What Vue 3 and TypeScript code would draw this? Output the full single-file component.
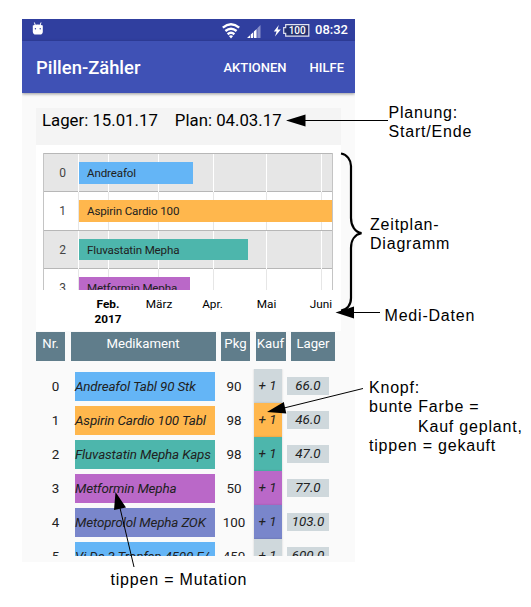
<script setup lang="ts">
interface Medication {
  nr: number
  name: string
  pack: number
  stock: string
  color: string
  buy: string
}

interface ChartRow {
  nr: number
  name: string
  color: string
  width: number
}

const blue = '#64b5f6'
const orange = '#ffb74d'
const teal = '#4db6ac'
const purple = '#ba68c8'
const indigo = '#7986cb'
const grey = '#cfd8dc'

const chartRows: ChartRow[] = [
  { nr: 0, name: 'Andreafol', color: blue, width: 114 },
  { nr: 1, name: 'Aspirin Cardio 100', color: orange, width: 255 },
  { nr: 2, name: 'Fluvastatin Mepha', color: teal, width: 169 },
  { nr: 3, name: 'Metformin Mepha', color: purple, width: 110.5 },
]

const medications: Medication[] = [
  { nr: 0, name: 'Andreafol Tabl 90 Stk', pack: 90, stock: '66.0', color: blue, buy: grey },
  { nr: 1, name: 'Aspirin Cardio 100 Tabl', pack: 98, stock: '46.0', color: orange, buy: orange },
  { nr: 2, name: 'Fluvastatin Mepha Kaps', pack: 98, stock: '47.0', color: teal, buy: teal },
  { nr: 3, name: 'Metformin Mepha', pack: 50, stock: '77.0', color: purple, buy: purple },
  { nr: 4, name: 'Metoprolol Mepha ZOK', pack: 100, stock: '103.0', color: indigo, buy: indigo },
  { nr: 5, name: 'Vi De 3 Tropfen 4500 E/', pack: 450, stock: '600.0', color: blue, buy: grey },
]
</script>

<template>
  <main class="page">
    <section class="phone">
      <div class="status">
        <svg class="robot" width="12" height="13" viewBox="0 0 12 13">
          <path d="M2.4 0.5 3.2 3M9 0.5 8.2 3" stroke="#fff" stroke-width="1" />
          <path d="M.8 3.4Q5.7 1.8 10.8 3.4V9.5Q10.8 12.6 7.8 12.6H3.8Q.8 12.6 .8 9.5Z" fill="#fff" />
          <circle cx="3.4" cy="6.8" r=".7" fill="#303f9f" />
          <circle cx="8.2" cy="6.8" r=".7" fill="#303f9f" />
        </svg>
        <svg class="signals" width="88" height="16" viewBox="0 0 88 16">
          <g fill="none" stroke="#fff" stroke-width="2.4">
            <path d="M0.8 4.6Q9 -2 17.2 4.6" />
            <path d="M3.4 8Q9 3.4 14.6 8" />
            <path d="M5.6 11.2Q9 8.4 12.4 11.2" />
          </g>
          <path d="M6.9 13 9 15.4 11.1 13Q9 11.4 6.9 13Z" fill="#fff" />
          <path d="M25 15 28 12.2V15ZM28.7 11.6 31.2 9.2V15H28.7ZM31.9 8.6 34.6 6V15H31.9Z" fill="#fff" />
          <path d="M35.3 5.3 38.5 2V15H35.3Z" fill="#8990ca" />
          <path d="M56.8 2 51.8 8.6H54.6L53 13.4 58.8 6.4H55.6Z" fill="#fff" />
          <path d="M63.7 1.6H86.8V13.2H63.7V10.3H61.7V4.6H63.7Z" fill="#24306f" stroke="#dfe2f2" stroke-width="1.2" />
          <text x="75.2" y="11" text-anchor="middle">100</text>
        </svg>
        <span class="clock">08:32</span>
      </div>
      <header class="appbar">
        <h1>Pillen-Zähler</h1>
        <span class="action">AKTIONEN</span>
        <span class="action help">HILFE</span>
      </header>

      <div class="content">
        <div class="plan">
          <span>Lager: 15.01.17</span>
          <span>Plan: 04.03.17</span>
        </div>
        <div class="chart">
          <div class="plot">
            <div v-for="row in chartRows" :key="row.nr" class="chart-row">
              <span class="row-nr">{{ row.nr }}</span>
              <div class="track">
                <svg class="grid" width="255" height="38" viewBox="0 0 255 38">
                  <path d="M.5 0V38M30.5 0V38M80.5 0V38M135.5 0V38M188.5 0V38M243.5 0V38" />
                </svg>
                <div class="bar" :style="{ width: row.width + 'px', background: row.color }">{{ row.name }}</div>
              </div>
            </div>
          </div>
          <div class="axis">
            <b>Feb.<br />2017</b><span>März</span><span>Apr.</span><span>Mai</span><span>Juni</span>
          </div>
        </div>

        <div class="table-head">
          <span>Nr.</span><span>Medikament</span><span>Pkg</span><span>Kauf</span><span>Lager</span>
        </div>
        <div class="table-body">
          <div v-for="med in medications" :key="med.nr" class="med">
            <span class="num">{{ med.nr }}</span>
            <div class="name" :style="{ background: med.color }">{{ med.name }}</div>
            <span class="num">{{ med.pack }}</span>
            <div class="buy" :style="{ background: med.buy }">+ 1</div>
            <div class="stock">{{ med.stock }}</div>
          </div>
        </div>
      </div>
    </section>

    <svg class="arrows" width="531" height="607" viewBox="0 0 531 607">
      <g fill="none" stroke="#000">
        <path d="M304 120.5H388M352 312.5H380M284 408 363 388.5M120 508 134 567" />
        <path d="M341 153.5C347 154.5 351 160 351 166V218C351 226 355 232 361.5 233.2C355 234.5 351 240 351 248V298C351 305 347 310 341 310.5" stroke-width="2.2" />
      </g>
      <path d="M286 120.5 305.5 114.5V126.5ZM335.5 312.5 354 306.5V318.5ZM267 412 283.8 402 286.3 413.5ZM115.5 492 114 510 126 507.5Z" />
    </svg>

    <p class="note planning">Planung:<br />Start/Ende</p>
    <p class="note diagram">Zeitplan-<br />Diagramm</p>
    <p class="note data">Medi-Daten</p>
    <p class="note button">Knopf:<br />bunte Farbe =<br /><span class="indent">Kauf geplant,</span><br />tippen = gekauft</p>
    <p class="note mutation">tippen = Mutation</p>
  </main>
</template>

<style>
body {
  background: #fff;
}
</style>

<style scoped>
.page {
  position: relative;
  width: 531px;
  height: 607px;
  padding: 19px 0 0 22px;
  box-sizing: border-box;
  overflow: hidden;
  font-family: Roboto, sans-serif;
  color: #212121;
}
.phone {
  width: 333px;
  height: 543px;
  background: #fafafa;
  overflow: hidden;
}
.status {
  display: flex;
  height: 22px;
  background: #303f9f;
  color: #fff;
}
.robot {
  margin: 3px 0 0 10px;
}
.signals {
  margin: 4px 0 0 178px;
}
.signals text {
  fill: #fff;
  font-size: 10px;
  font-weight: 500;
}
.clock {
  margin-left: 5px;
  line-height: 22px;
  font-size: 13px;
  font-weight: 500;
}
.appbar {
  display: flex;
  align-items: center;
  height: 52px;
  padding: 0 11px 0 14px;
  background: #3f51b5;
  color: #fff;
  box-shadow: 0 1px 3px rgba(0, 0, 0, 0.4);
}
h1 {
  margin: 0 auto 0 0;
  font-size: 18.4px;
  font-weight: 500;
}
.action {
  font-size: 13px;
  font-weight: 500;
}
.help {
  margin-left: 23px;
}
.content {
  padding: 15px 14px 0;
}
.plan {
  display: flex;
  gap: 17px;
  height: 37px;
  padding-left: 6px;
  background: #f4f4f4;
  color: #000;
  font-size: 16.8px;
  line-height: 25px;
  white-space: nowrap;
}
.chart {
  width: 305px;
  height: 186px;
  padding: 8px 0 0 7px;
  box-sizing: border-box;
  background: #fff;
}
.plot {
  width: 290px;
  height: 137px;
  overflow: hidden;
  box-sizing: border-box;
  border-left: 1px solid #c4c4c4;
  border-right: 1px solid #c4c4c4;
}
.chart-row {
  display: flex;
  height: 38.25px;
  box-sizing: border-box;
  border-top: 1px solid #b7b7b7;
}
.chart-row:nth-child(odd) {
  background: #e6e6e6;
}
.row-nr {
  flex: none;
  width: 34px;
  padding-left: 3px;
  box-sizing: border-box;
  text-align: center;
  font-size: 12px;
  line-height: 38px;
  color: #444;
}
.track {
  flex: none;
  position: relative;
  padding: 8px 0 0 1px;
}
.grid {
  position: absolute;
  top: 0;
  left: 0;
  stroke: #e6e6e6;
}
.chart-row:nth-child(odd) .grid {
  stroke: #fff;
}
.bar {
  position: relative;
  height: 21.5px;
  padding-left: 8px;
  box-sizing: border-box;
  font-size: 11.6px;
  letter-spacing: -0.15px;
  line-height: 22px;
  white-space: nowrap;
}
.axis {
  display: grid;
  grid-template-columns: 50px 52px 55px 53px 56px;
  margin: 7px 0 0 40px;
  color: #000;
  font-size: 11.8px;
  line-height: 14.5px;
  text-align: center;
}
.table-head {
  display: grid;
  grid-template-columns: 29px 145px 29px 30px 44px;
  column-gap: 5.5px;
  margin-top: 1px;
  height: 29px;
  color: #fff;
  font-size: 13.2px;
  line-height: 24px;
  text-align: center;
}
.table-head span {
  background: #607d8b;
}
.table-body {
  height: 187px;
  margin-top: 8px;
  overflow: hidden;
}
.med {
  display: grid;
  grid-template-columns: 39px 139.5px 39px 28px 42px;
  column-gap: 0;
  align-items: center;
  height: 34px;
  font-size: 13.4px;
  text-align: center;
}
.name {
  height: 29px;
  line-height: 29px;
  text-align: left;
  font-style: italic;
  letter-spacing: -0.14px;
  white-space: nowrap;
}
.buy {
  height: 34px;
  line-height: 34px;
  font-style: italic;
  box-shadow: 0 0 2px rgba(0, 0, 0, 0.18);
}
.stock {
  margin-left: 5.5px;
  width: 42px;
  height: 18px;
  line-height: 18px;
  background: #cfd8dc;
  font-style: italic;
}
.arrows {
  position: absolute;
  top: 0;
  left: 0;
}
.note {
  position: absolute;
  margin: 0;
  font: 16px/19px 'Liberation Sans', sans-serif;
  letter-spacing: 0.8px;
  color: #000;
  white-space: nowrap;
}
.planning {
  left: 388.5px;
  top: 103px;
}
.diagram {
  left: 370px;
  top: 215px;
}
.data {
  left: 384.5px;
  top: 306px;
}
.button {
  left: 369px;
  top: 378px;
  line-height: 19.3px;
}
.indent {
  padding-left: 49px;
}
.mutation {
  left: 110.5px;
  top: 570px;
}
</style>
